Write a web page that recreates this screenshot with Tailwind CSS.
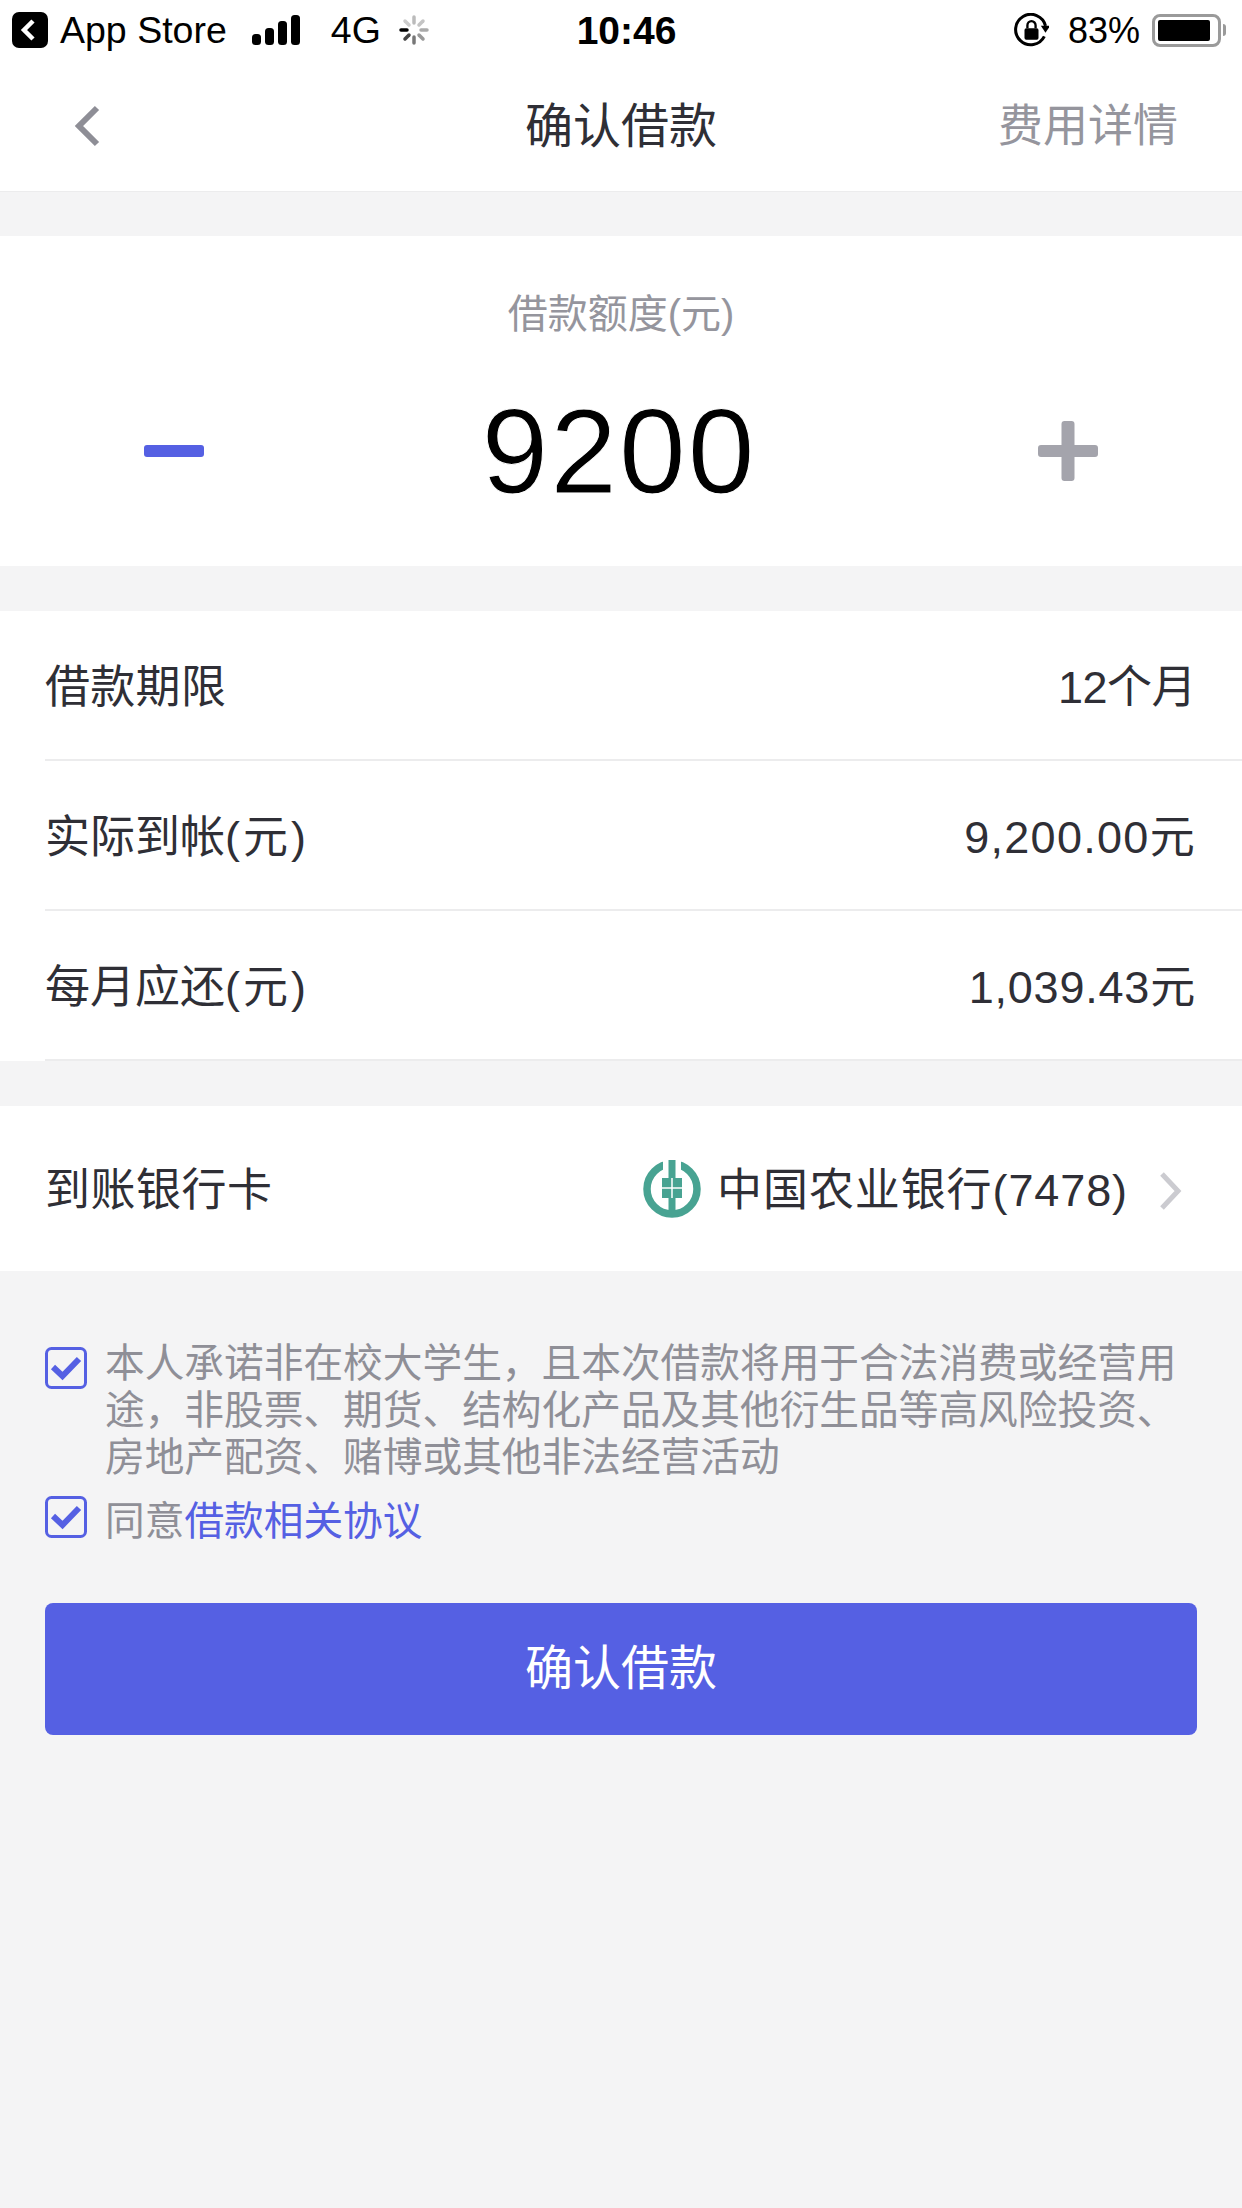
<!DOCTYPE html>
<html lang="zh-CN">
<head>
  <meta charset="UTF-8"/>
  <meta name="viewport" content="width=device-width, initial-scale=1.0"/>
  <title>确认借款</title>
  <script src="https://cdn.jsdelivr.net/npm/@tailwindcss/browser@4"></script>
</head>
<body class="bg-[#f4f4f5] font-['Liberation_Sans','Noto_Sans_CJK_SC',sans-serif] w-[1242px] h-[2208px] overflow-hidden">
  <!-- Status bar -->
  <div class="bg-white h-[60px] flex items-center justify-between pl-[12px] pr-[16px] text-black">
    <div class="flex items-center text-[37.500px] leading-none">
      <svg class="w-[36px] h-[36px]" viewBox="0 0 36 36"><rect width="36" height="36" rx="7" fill="#000"/><path d="M21 9l-9 9 9 9" fill="none" stroke="#fff" stroke-width="4.500"/></svg>
      <span class="ml-[12px] mt-[2px]">App Store</span>
      <svg class="ml-[25px] w-[48px] h-[30px]" viewBox="0 0 48 30"><rect x="0" y="19" width="9" height="11" rx="3.500" fill="#000"/><rect x="13" y="13" width="9" height="17" rx="3.500" fill="#000"/><rect x="26" y="6" width="9" height="24" rx="3.500" fill="#000"/><rect x="39" y="0" width="9" height="30" rx="3.500" fill="#000"/></svg>
      <span class="ml-[31px] mt-[2px]">4G</span>
      <svg class="ml-[18px] w-[30px] h-[30px]" viewBox="0 0 30 30" stroke-width="3.500" stroke-linecap="round" fill="none">
        <path d="M15 2v6" stroke="#bbb"/><path d="M24 6l-4 4" stroke="#c4c4c4"/><path d="M28 15h-6" stroke="#aaa"/><path d="M24 24l-4-4" stroke="#999"/><path d="M15 28v-6" stroke="#777"/><path d="M6 24l4-4" stroke="#444"/><path d="M2 15h6" stroke="#000"/><path d="M6 6l4 4" stroke="#ccc"/>
      </svg>
    </div>
    <div class="absolute left-0 w-[1242px] pl-[11px] text-center text-[39px] font-bold leading-none pointer-events-none">10:46</div>
    <div class="flex items-center text-[36px] leading-none">
      <svg class="w-[35px] h-[35px]" viewBox="0 0 30 30"><path d="M26 20A13 13 0 1 1 27 11" fill="none" stroke="#000" stroke-width="2.600"/><path d="M23 11h8l-4 6z" fill="#000"/><rect x="9" y="13" width="12" height="10" rx="1.500" fill="#000"/><path d="M11.500 13v-2.500a3.500 3.500 0 0 1 7 0V13" fill="none" stroke="#000" stroke-width="2"/></svg>
      <span class="ml-[19px] mt-[2px]">83%</span>
      <div class="ml-[12px] w-[69px] h-[33px] border-[3px] border-[#9a9a9a] rounded-[8px] p-[3px]"><div class="w-[52px] h-full bg-black rounded-[2px]"></div></div>
      <div class="ml-[2px] w-[3px] h-[12px] bg-[#9a9a9a] rounded-r-full"></div>
    </div>
  </div>

  <!-- Nav -->
  <header class="relative bg-white h-[132px] flex items-center justify-between pl-[72px] pr-[64px] border-b border-[#ececed]">
    <svg class="w-[30px] h-[42px]" viewBox="0 0 30 42"><path d="M25 3L7 21l18 18" fill="none" stroke="#8e8e96" stroke-width="6"/></svg>
    <div class="absolute left-0 w-full pt-[2px] text-center text-[48px] leading-none text-[#2f2f36]">确认借款</div>
    <div class="text-[45px] pt-[2px] leading-none text-[#95959d]">费用详情</div>
  </header>

  <!-- Amount -->
  <section class="bg-white mt-[44px] h-[330px]">
    <div class="pt-[58px] text-center text-[40px] leading-none text-[#95959d]">借款额度(元)</div>
    <div class="flex items-center justify-between pl-[144px] pr-[144px] mt-[49px]">
      <div class="w-[60px] h-[12px] bg-[#5560e3] rounded-[3px]"></div>
      <div class="pr-[4px] text-[120px] leading-[136px] tracking-[2px] text-black [-webkit-text-stroke:1px_#fff]">9200</div>
      <svg class="w-[60px] h-[60px]" viewBox="0 0 60 60"><path d="M23.500 3a3 3 0 0 1 3-3h7a3 3 0 0 1 3 3v21H57a3 3 0 0 1 3 3v6a3 3 0 0 1-3 3H36.500v21a3 3 0 0 1-3 3h-7a3 3 0 0 1-3-3V36H3a3 3 0 0 1-3-3v-6a3 3 0 0 1 3-3h20.500z" fill="#a4a4ac"/></svg>
    </div>
  </section>

  <!-- Loan details -->
  <section class="bg-white mt-[45px] pl-[45px] text-[45px] text-[#2f2f36]">
    <div class="h-[150px] pt-[6px] flex items-center justify-between pr-[46px] border-b-2 border-[#ececed]"><span class="tracking-[0.300px]">借款期限</span><span class="tracking-[-0.500px]">12个月</span></div>
    <div class="h-[150px] pt-[6px] flex items-center justify-between pr-[46px] border-b-2 border-[#ececed]"><span>实际到帐<span class="tracking-[3px]">(元)</span></span><span class="tracking-[1.300px]">9,200.00元</span></div>
    <div class="h-[150px] pt-[6px] flex items-center justify-between pr-[46px] border-b-2 border-[#ececed]"><span>每月应还<span class="tracking-[3px]">(元)</span></span><span class="tracking-[0.800px]">1,039.43元</span></div>
  </section>

  <!-- Bank card -->
  <section class="bg-white mt-[45px] h-[165px] pt-[4px] pl-[45px] pr-[60px] flex items-center justify-between text-[45px] text-[#2f2f36]">
    <span class="tracking-[0.500px]">到账银行卡</span>
    <div class="flex items-center">
      <svg class="w-[58px] h-[58px] -mt-[4px]" viewBox="0 0 58 58">
        <circle cx="29" cy="29" r="25" fill="none" stroke="#48a392" stroke-width="7.500"/>
        <rect x="20" y="0" width="18" height="18" fill="#fff"/>
        <rect x="25.500" y="0" width="7" height="18" fill="#48a392"/>
        <rect x="19" y="18" width="20" height="20" fill="#48a392"/>
        <path d="M29 18v20M19 28h20" stroke="#fff" stroke-width="1.500"/>
        <rect x="25.500" y="38" width="7" height="19" fill="#48a392"/>
      </svg>
      <span class="ml-[16px] tracking-[0.900px]">中国农业银行(7478)</span>
      <svg class="ml-[30px] w-[24px] h-[40px]" viewBox="0 0 24 40"><path d="M4 3l16 17L4 37" fill="none" stroke="#cbcbd0" stroke-width="5"/></svg>
    </div>
  </section>

  <!-- Agreements -->
  <section class="pt-[69px] px-[45px] text-[39.700px] leading-[47px] text-[#8f8f97]">
    <div class="flex items-start gap-[18px]">
      <svg class="shrink-0 w-[42px] h-[42px] mt-[7px]" viewBox="0 0 42 42"><rect x="1.500" y="1.500" width="39" height="39" rx="5" fill="none" stroke="#5560e3" stroke-width="3"/><path d="M8 20l9.500 9L34 12" fill="none" stroke="#5560e3" stroke-width="6"/></svg>
      <p class="w-[1085px]">本人承诺非在校大学生，且本次借款将用于合法消费或经营用途，非股票、期货、结构化产品及其他衍生品等高风险投资、房地产配资、赌博或其他非法经营活动</p>
    </div>
    <div class="flex items-start gap-[18px] mt-[17px]">
      <svg class="shrink-0 w-[42px] h-[42px] -mt-[2px]" viewBox="0 0 42 42"><rect x="1.500" y="1.500" width="39" height="39" rx="5" fill="none" stroke="#5560e3" stroke-width="3"/><path d="M8 20l9.500 9L34 12" fill="none" stroke="#5560e3" stroke-width="6"/></svg>
      <p>同意<span class="text-[#5560e3]">借款相关协议</span></p>
    </div>
  </section>

  <div class="mx-[45px] mt-[58px] h-[132px] bg-[#5560e3] rounded-[8px] flex items-center justify-center text-[48px] text-white">确认借款</div>
</body>
</html>
